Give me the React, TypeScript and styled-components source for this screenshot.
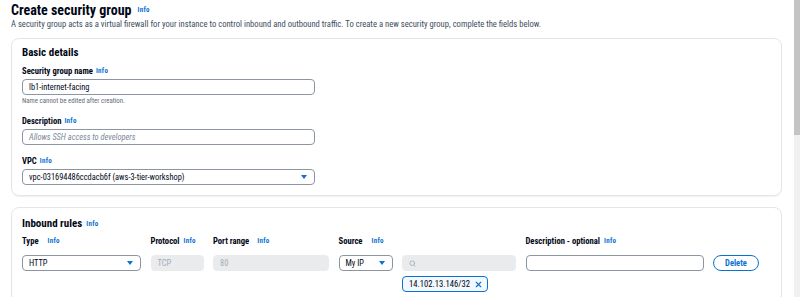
import { FC, ReactNode } from "react";
import styled, { createGlobalStyle } from "styled-components";
import { Search, X } from "lucide-react";

const GlobalStyle = createGlobalStyle`
  body {
    margin: 0;
    background: #ffffff;
    font-family: "Roboto Condensed", "Roboto", sans-serif;
    color: #000716;
  }
`;

const PageStyled = styled.div`
  display: flex;
  width: 800px;
  height: 297px;
  overflow: hidden;
`;

const MainStyled = styled.div`
  flex: 1;
  display: flex;
  flex-direction: column;
  padding: 0 12px 0 11px;
`;

const ScrollbarStyled = styled.div`
  width: 6px;
  height: 297px;
  background: #f1f1f1;
  display: flex;
  flex-direction: column;
  & > div {
    height: 135px;
    background: #c4c4c4;
  }
`;

const TitleStyled = styled.h1`
  display: flex;
  align-items: center;
  gap: 6px;
  margin: 0;
  font-size: 14px;
  line-height: 20px;
  font-weight: 700;
  color: #000716;
`;

const SubtitleStyled = styled.p`
  margin: 0;
  font-size: 8.6px;
  line-height: 9px;
  color: #414d5c;
`;

const InfoStyled = styled.a<{ size?: number }>`
  flex-shrink: 0;
  font-size: ${(props) => props.size ?? 7}px;
  font-weight: 700;
  color: #0972d3;
  text-decoration: none;
  letter-spacing: 0.3px;
`;

const CardStyled = styled.section<{ top: number; padTop: number }>`
  margin-top: ${(props) => props.top}px;
  border: 1px solid #e3e5e8;
  border-radius: 8px;
  box-shadow: 0 1px 1px rgba(0, 7, 22, 0.06);
  padding: ${(props) => props.padTop}px 11px 10px 10px;
  display: flex;
  flex-direction: column;
  flex-shrink: 0;
`;

const CardHeaderStyled = styled.h2`
  display: flex;
  align-items: center;
  gap: 4px;
  margin: 0;
  font-size: 11px;
  line-height: 14px;
  font-weight: 700;
`;

const FieldListStyled = styled.div`
  display: flex;
  flex-direction: column;
  gap: 11px;
  margin-top: 6px;
  width: 293px;
`;

const FieldStyled = styled.div`
  display: flex;
  flex-direction: column;
`;

const LabelStyled = styled.div<{ infoGap?: number }>`
  display: flex;
  align-items: center;
  gap: ${(props) => props.infoGap ?? 3}px;
  font-size: 8.6px;
  line-height: 10px;
  font-weight: 700;
  margin-bottom: 3px;
  white-space: nowrap;
  overflow: visible;
`;

const HelpStyled = styled.div`
  margin-top: 2px;
  font-size: 6.9px;
  line-height: 8px;
  color: #5f6b7a;
`;

const InputStyled = styled.div<{ disabled?: boolean; placeholder?: boolean }>`
  box-sizing: border-box;
  height: 16px;
  display: flex;
  align-items: center;
  gap: 4px;
  padding: 0 6px;
  border-radius: 4px;
  border: 1px solid ${(props) => (props.disabled ? "#e9ebed" : "#8c96a3")};
  background: ${(props) => (props.disabled ? "#e9ebed" : "#ffffff")};
  color: ${(props) =>
    props.disabled ? "#a4acb7" : props.placeholder ? "#7d8998" : "#000716"};
  font-style: ${(props) => (props.placeholder ? "italic" : "normal")};
  font-size: 8.4px;
  white-space: nowrap;
  overflow: hidden;
`;

const SelectStyled = styled(InputStyled)`
  justify-content: space-between;
  padding-right: 7px;
  &::after {
    content: "";
    border-left: 3.5px solid transparent;
    border-right: 3.5px solid transparent;
    border-top: 4px solid #0972d3;
  }
`;

const RulesGridStyled = styled.div`
  display: grid;
  grid-template-columns: 119px 53px 116px 54px 114px 178px 46px;
  column-gap: 9.5px;
  margin-top: 5px;
  align-items: start;
`;

const RulesLabelStyled = styled(LabelStyled)<{ span?: number }>`
  grid-column: span ${(props) => props.span ?? 1};
  margin-bottom: 9px;
`;

const TokenStyled = styled.div`
  grid-column: 5;
  box-sizing: border-box;
  margin-top: 5px;
  height: 16px;
  width: 86px;
  display: flex;
  align-items: center;
  justify-content: space-between;
  padding: 0 4px 0 6px;
  border: 1px solid #0972d3;
  border-radius: 4px;
  background: #f2f8fd;
  font-size: 8.6px;
  color: #000716;
`;

const DeleteButtonStyled = styled.button`
  box-sizing: border-box;
  height: 16px;
  border: 1.5px solid #0972d3;
  border-radius: 12px;
  background: #ffffff;
  color: #0972d3;
  font-family: inherit;
  font-size: 8.5px;
  font-weight: 700;
  padding: 0;
`;

const Info: FC<{ size?: number }> = ({ size }) => (
  <InfoStyled href="#" size={size}>
    Info
  </InfoStyled>
);

const Field: FC<{ label: string; help?: string; children: ReactNode }> = ({
  label,
  help,
  children,
}) => (
  <FieldStyled>
    <LabelStyled>
      {label} <Info />
    </LabelStyled>
    {children}
    {help && <HelpStyled>{help}</HelpStyled>}
  </FieldStyled>
);

const ruleLabels: Array<{ name: string; gap: number; span?: number }> = [
  { name: "Type", gap: 9 },
  { name: "Protocol", gap: 4 },
  { name: "Port range", gap: 8 },
  { name: "Source", gap: 9, span: 2 },
  { name: "Description - optional", gap: 4, span: 2 },
];

const App: FC = () => {
  return (
    <PageStyled>
      <GlobalStyle />
      <MainStyled>
        <TitleStyled>
          Create security group <Info size={7} />
        </TitleStyled>
        <SubtitleStyled>
          A security group acts as a virtual firewall for your instance to
          control inbound and outbound traffic. To create a new security group,
          complete the fields below.
        </SubtitleStyled>

        <CardStyled top={9} padTop={7}>
          <CardHeaderStyled>Basic details</CardHeaderStyled>
          <FieldListStyled>
            <Field
              label="Security group name"
              help="Name cannot be edited after creation."
            >
              <InputStyled>lb1-internet-facing</InputStyled>
            </Field>
            <Field label="Description">
              <InputStyled placeholder>Allows SSH access to developers</InputStyled>
            </Field>
            <Field label="VPC">
              <SelectStyled>vpc-031694486ccdacb6f (aws-3-tier-workshop)</SelectStyled>
            </Field>
          </FieldListStyled>
        </CardStyled>

        <CardStyled top={11} padTop={9}>
          <CardHeaderStyled>
            Inbound rules <Info />
          </CardHeaderStyled>
          <RulesGridStyled>
            {ruleLabels.map((col) => (
              <RulesLabelStyled key={col.name} infoGap={col.gap} span={col.span}>
                {col.name} <Info />
              </RulesLabelStyled>
            ))}
            <SelectStyled>HTTP</SelectStyled>
            <InputStyled disabled>TCP</InputStyled>
            <InputStyled disabled>80</InputStyled>
            <SelectStyled>My IP</SelectStyled>
            <InputStyled disabled>
              <Search size={7} color="#9ba7b6" strokeWidth={2.5} />
            </InputStyled>
            <InputStyled />
            <DeleteButtonStyled>Delete</DeleteButtonStyled>
            <TokenStyled>
              14.102.13.146/32
              <X size={9} color="#0972d3" strokeWidth={3} />
            </TokenStyled>
          </RulesGridStyled>
        </CardStyled>
      </MainStyled>
      <ScrollbarStyled>
        <div />
      </ScrollbarStyled>
    </PageStyled>
  );
};

export default App;
